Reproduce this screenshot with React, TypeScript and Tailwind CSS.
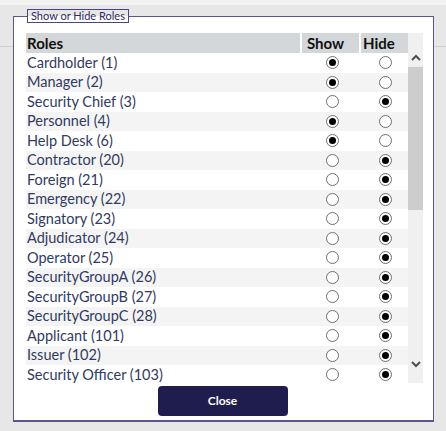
import React from 'react';

type Role = { name: string; show: boolean };

const roles: Role[] = [
  { name: 'Cardholder (1)', show: true },
  { name: 'Manager (2)', show: true },
  { name: 'Security Chief (3)', show: false },
  { name: 'Personnel (4)', show: true },
  { name: 'Help Desk (6)', show: true },
  { name: 'Contractor (20)', show: false },
  { name: 'Foreign (21)', show: false },
  { name: 'Emergency (22)', show: false },
  { name: 'Signatory (23)', show: false },
  { name: 'Adjudicator (24)', show: false },
  { name: 'Operator (25)', show: false },
  { name: 'SecurityGroupA (26)', show: false },
  { name: 'SecurityGroupB (27)', show: false },
  { name: 'SecurityGroupC (28)', show: false },
  { name: 'Applicant (101)', show: false },
  { name: 'Issuer (102)', show: false },
  { name: 'Security Officer (103)', show: false },
];

function Radio({ checked }: { checked: boolean }) {
  return (
    <span className="w-[13px] h-[13px] rounded-full border border-[#6f6f6f] bg-white flex items-center justify-center">
      {checked && <span className="w-[7px] h-[7px] rounded-full bg-black"></span>}
    </span>
  );
}

export default function App() {
  return (
    <div className="relative w-[446px] h-[431px] bg-[#e7e7e7] overflow-hidden" style={{ fontFamily: 'Lato, "Open Sans", sans-serif' }}>
      {/* page behind the dialog */}
      <div className="h-[5px] bg-[#f3f3f3]"></div>
      <div className="h-[41px]"></div>
      <div className="h-px bg-[#cfcfcf]"></div>

      <fieldset className="absolute left-[13px] top-[9px] w-[421px] h-[413px] m-0 pt-0 pb-0 pl-[12px] pr-[10px] border border-[#5b5591] border-b-2 bg-white">
        <legend className="ml-[1px] px-[3px] border border-[#4b4487] text-[11px] leading-[12px] text-[#2f2a66]">Show or Hide Roles</legend>

        <div className="flex mt-[10px] h-[350px] w-[397px]">
          <div className="w-[382px] overflow-hidden">
            <div className="flex h-[20px] text-[15px] font-bold text-[#111] leading-[20px]">
              <div className="w-[274px] bg-[#d3d7da] pl-[1px]">Roles</div>
              <div className="w-[57px] ml-[2px] bg-[#d3d7da] pl-[5px]">Show</div>
              <div className="w-[47px] ml-[2px] bg-[#d3d7da] pl-[2px]">Hide</div>
            </div>
            {roles.map((r, i) => (
              <div key={r.name} className={`flex items-center h-[19.5px] text-[14.5px] text-[#313a62] ${i % 2 === 1 ? 'bg-[#f4f4f4]' : 'bg-white'}`}>
                <div className="w-[274px] pl-[1px]">{r.name}</div>
                <div className="w-[59px] flex justify-center pl-[6px]"><Radio checked={r.show} /></div>
                <div className="w-[49px] flex justify-center pl-[3px]"><Radio checked={!r.show} /></div>
              </div>
            ))}
          </div>

          {/* scrollbar */}
          <div className="w-[15px] bg-[#f0f0f0] flex flex-col">
            <div className="h-[34px] flex items-center justify-center pt-[14px]">
              <svg width="10" height="7" viewBox="0 0 10 7"><path d="M1 6 L5 2 L9 6" fill="none" stroke="#505050" strokeWidth="2" /></svg>
            </div>
            <div className="h-[143px] bg-[#cdcdcd]"></div>
            <div className="flex-1 flex items-end justify-center pb-[15px]">
              <svg width="10" height="7" viewBox="0 0 10 7"><path d="M1 1 L5 5 L9 1" fill="none" stroke="#505050" strokeWidth="2" /></svg>
            </div>
          </div>
        </div>

        <div className="flex justify-center mt-[3px] pr-[4px]">
          <button className="w-[130px] h-[30px] rounded-[4px] bg-[#1e1d4e] text-white text-[12px] font-bold">Close</button>
        </div>
      </fieldset>
    </div>
  );
}
